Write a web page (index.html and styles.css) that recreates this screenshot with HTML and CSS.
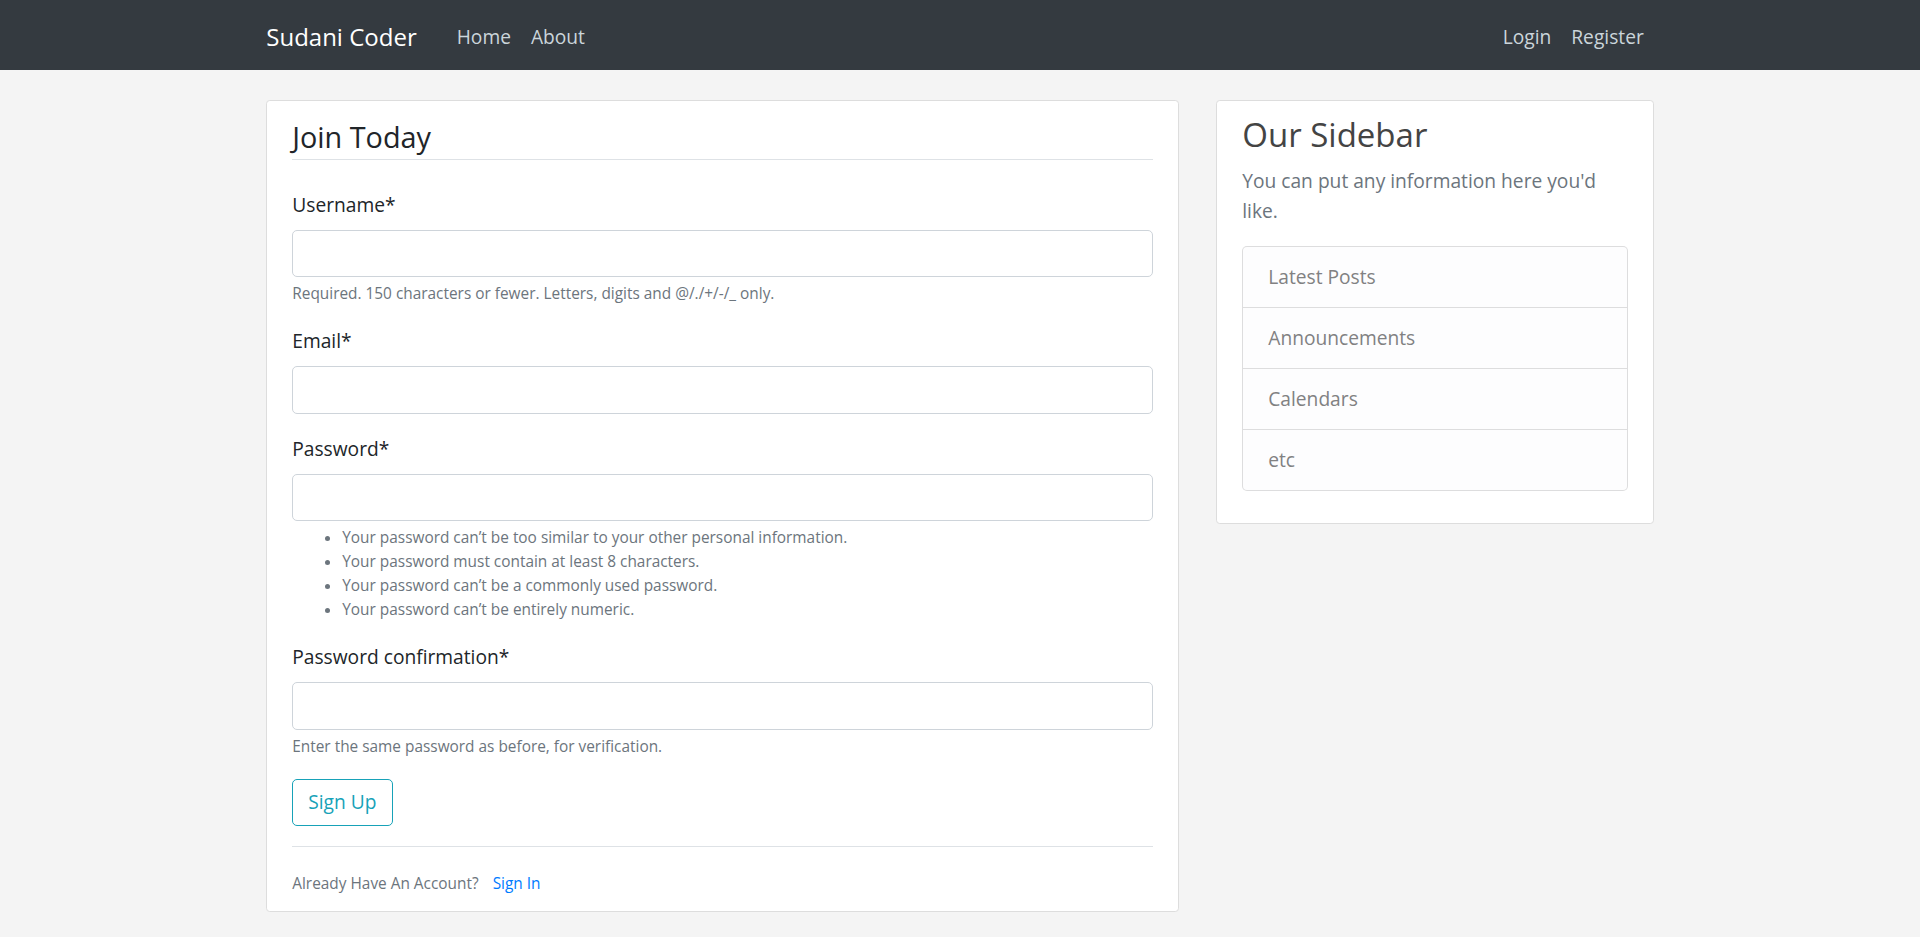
FILE: index.html
```html
<!DOCTYPE html>
<html lang="en">
<head>
<meta charset="utf-8">
<title>Sudani Coder</title>
<link rel="stylesheet" href="styles.css">
</head>
<body>
<header class="site-header">
  <nav class="navbar">
    <div class="container nav-inner">
      <a class="navbar-brand" href="#">Sudani Coder</a>
      <div class="navbar-nav nav-main">
        <a class="nav-link" href="#">Home</a>
        <a class="nav-link" href="#">About</a>
      </div>
      <div class="navbar-nav nav-auth">
        <a class="nav-link" href="#">Login</a>
        <a class="nav-link" href="#">Register</a>
      </div>
    </div>
  </nav>
</header>
<main class="container main">
  <div class="row">
    <div class="col-main">
      <div class="content-section">
        <form>
          <fieldset class="fieldset">
            <legend class="legend">Join Today</legend>
            <div class="form-group">
              <label class="form-label">Username*</label>
              <input class="form-control" type="text">
              <small class="form-text">Required. 150 characters or fewer. Letters, digits and @/./+/-/_ only.</small>
            </div>
            <div class="form-group">
              <label class="form-label">Email*</label>
              <input class="form-control" type="email">
            </div>
            <div class="form-group">
              <label class="form-label">Password*</label>
              <input class="form-control" type="password">
              <small class="form-text">
                <ul class="help-list">
                  <li>Your password can’t be too similar to your other personal information.</li>
                  <li>Your password must contain at least 8 characters.</li>
                  <li>Your password can’t be a commonly used password.</li>
                  <li>Your password can’t be entirely numeric.</li>
                </ul>
              </small>
            </div>
            <div class="form-group">
              <label class="form-label">Password confirmation*</label>
              <input class="form-control" type="password">
              <small class="form-text">Enter the same password as before, for verification.</small>
            </div>
          </fieldset>
          <div class="form-group">
            <button class="btn-outline-info" type="button">Sign Up</button>
          </div>
        </form>
        <div class="account-row">
          <small class="text-muted">Already Have An Account? <a class="signin-link" href="#">Sign In</a></small>
        </div>
      </div>
    </div>
    <div class="col-side">
      <div class="content-section">
        <h3 class="sidebar-title">Our Sidebar</h3>
        <p class="sidebar-text">You can put any information here you'd like.</p>
        <ul class="list-group">
          <li class="list-group-item">Latest Posts</li>
          <li class="list-group-item">Announcements</li>
          <li class="list-group-item">Calendars</li>
          <li class="list-group-item">etc</li>
        </ul>
      </div>
    </div>
  </div>
</main>
</body>
</html>
```

FILE: styles.css
```css
* { box-sizing: border-box; }

html, body {
  margin: 0;
  padding: 0;
}

body {
  background: #f4f4f4;
  color: #333333;
  font-family: "Open Sans", "Noto Sans", "Liberation Sans", sans-serif;
  font-size: 19.2px;
  line-height: 30px;
}

a { text-decoration: none; }

.container {
  width: 1425px;
  margin: 0 auto;
  padding: 0 18.75px;
}

/* navbar */
.navbar {
  background: #343a40;
  padding: 10px 0;
}

.nav-inner {
  display: flex;
  align-items: center;
}

.navbar-brand {
  color: #ffffff;
  font-size: 24px;
  line-height: 37.5px;
  padding: 7.5px 0 5px;
  margin-right: 30px;
}

.navbar-nav {
  display: flex;
}

.nav-auth { margin-left: auto; }

.nav-link {
  color: #cbd5db;
  padding: 11.5px 10px 8.5px;
  font-size: 19.2px;
  line-height: 30px;
}

/* layout */
.main { padding-top: 30px; }

.row {
  display: flex;
  margin: 0 -18.75px;
}

.col-main {
  flex: 0 0 66.6667%;
  padding: 0 18.75px;
}

.col-side {
  flex: 0 0 33.3333%;
  padding: 0 18.75px;
}

.content-section {
  background: #ffffff;
  padding: 12.5px 25px;
  border: 1px solid #dddddd;
  border-radius: 3.75px;
  margin-bottom: 25px;
}

/* form */
.fieldset {
  border: 0;
  padding: 0;
  margin: 0;
  min-width: 0;
}

.legend {
  display: block;
  width: 100%;
  padding: 0;
  font-size: 28.8px;
  line-height: 45px;
  color: #212529;
  border-bottom: 1px solid #dee2e6;
  margin-bottom: 30px;
}

.form-group { margin-bottom: 20px; }

.form-label {
  display: inline-block;
  margin-bottom: 10px;
  color: #212529;
}

.form-control {
  display: block;
  width: 100%;
  height: 47.5px;
  padding: 7.5px 15px;
  font: inherit;
  color: #495057;
  background: #ffffff;
  border: 1px solid #ced4da;
  border-radius: 5px;
}

.form-text {
  display: block;
  margin-top: 5px;
  font-size: 15.4px;
  line-height: 24px;
  color: #6c757d;
}

.help-list {
  margin: 0;
  padding-left: 50px;
}

.btn-outline-info {
  display: inline-block;
  font: inherit;
  color: #17a2b8;
  background: transparent;
  border: 1px solid #17a2b8;
  border-radius: 5px;
  padding: 7.5px 15px;
  line-height: 30px;
}

.account-row {
  border-top: 1px solid #dee2e6;
  padding-top: 20px;
}

.text-muted {
  font-size: 15.4px;
  color: #6c757d;
}

.signin-link {
  color: #007bff;
  margin-left: 10px;
}

/* sidebar */
.sidebar-title {
  font-size: 33px;
  line-height: 42px;
  font-weight: 400;
  color: #444444;
  margin: 0 0 10px;
}

.sidebar-text {
  color: #6c757d;
  margin: 0 0 20px;
}

.list-group {
  list-style: none;
  padding: 0;
  margin: 0 0 20px;
}

.list-group-item {
  padding: 15px 25px;
  background: #fdfdfe;
  color: #818182;
  border: 1px solid rgba(0, 0, 0, 0.125);
}

.list-group-item + .list-group-item { border-top: 0; }

.list-group-item:first-child {
  border-top-left-radius: 5px;
  border-top-right-radius: 5px;
}

.list-group-item:last-child {
  border-bottom-left-radius: 5px;
  border-bottom-right-radius: 5px;
}
```
